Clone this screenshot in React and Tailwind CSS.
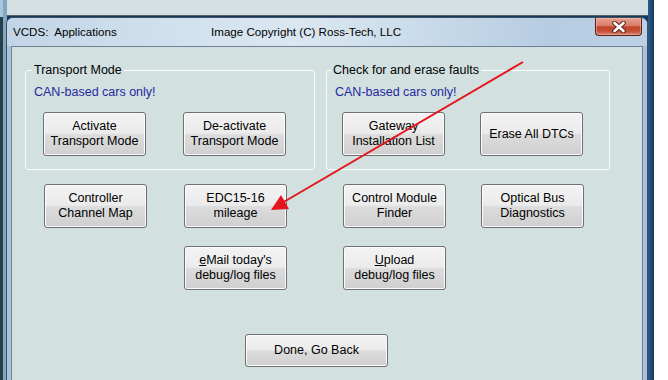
import React from "react";

const btnBase =
  "flex flex-col items-center justify-center shrink-0 rounded-[3px] border border-[#707070] bg-[linear-gradient(to_bottom,#f3f3f3_0%,#ebebeb_48%,#dcdcdc_52%,#cfcfcf_100%)] shadow-[inset_0_0_0_1px_#fbfbfb] text-[12.5px] leading-[15px] text-black text-center";

function Btn({ children, className = "w-[103px] h-[44px]" }) {
  return <div className={btnBase + " " + className}>{children}</div>;
}

export default function App() {
  return (
    <div className="relative w-[668px] h-[380px] overflow-hidden bg-white font-['Liberation_Sans',Arial,sans-serif]">
      {/* background window */}
      <div className="absolute left-0 top-0 w-[654px] h-[380px] flex bg-[#16395e]">
        <div className="w-[3px] h-full bg-[linear-gradient(to_bottom,#a9c6e0_0px,#a9c6e0_17px,#23404b_17px,#23404b_100%)]" />
        <div className="w-[4px] h-full bg-[#86a6c0]" />
        <div className="flex-1 h-[16px] bg-[#d3dfe0] border-b border-[#51616c]" />
        <div className="w-[6px] h-full bg-[linear-gradient(to_right,#2b5d8c,#16395e)]" />
      </div>

      {/* front window */}
      <div className="absolute left-[6px] top-[17px] w-[642px] h-[380px] rounded-t-[7px] border border-[#3e4f5f] bg-[#a8c3dd] flex flex-col">
        {/* title bar */}
        <div className="h-[28px] shrink-0 flex items-center pl-[6px] rounded-t-[6px] bg-[linear-gradient(to_right,#c2d5e6_0%,#d3e2ef_30%,#dbe7f1_45%,#c9dbea_65%,#b6cce2_85%,#bcd1e6_100%)] text-[11.6px] text-black">
          <span className="w-[198px] whitespace-pre">VCDS:  Applications</span>
          <span className="whitespace-pre">Image Copyright (C) Ross-Tech, LLC</span>
        </div>
        {/* close button */}
        <div className="absolute left-[588px] top-0 w-[47px] h-[18px] rounded-b-[4px] border border-t-0 border-[#5b1f16] bg-[linear-gradient(to_bottom,#e6a292_0%,#d97c67_45%,#c3432b_52%,#c44d35_75%,#d5826f_100%)] shadow-[inset_0_0_0_1px_rgba(255,200,190,0.45)] flex items-center justify-center">
          <svg width="14" height="12" viewBox="0 0 14 12">
            <path d="M2.5 2 L11.5 10 M11.5 2 L2.5 10" stroke="#5a2a22" strokeWidth="4.6" strokeLinecap="round" />
            <path d="M2.5 2 L11.5 10 M11.5 2 L2.5 10" stroke="#ffffff" strokeWidth="2.6" strokeLinecap="round" />
          </svg>
        </div>

        {/* frame + client */}
        <div className="flex-1 px-[4px]">
          <div className="h-full border border-b-0 border-[#6f8192] bg-[#d3e0e0] flex flex-col pl-[13px]">
            {/* groups */}
            <div className="flex mt-[16px]">
              <fieldset className="w-[290px] border border-[#fafcfc] rounded-[3px] pb-[13px]">
                <legend className="ml-[6px] px-[2px] text-[12.5px] leading-[15px] text-black">Transport Mode</legend>
                <div className="ml-[8px] mt-[7px] text-[12.5px] leading-[15px] text-[#1f2a9e]">CAN-based cars only!</div>
                <div className="flex mt-[12px] ml-[17px] gap-[37px]">
                  <Btn><span>Activate</span><span>Transport Mode</span></Btn>
                  <Btn><span>De-activate</span><span>Transport Mode</span></Btn>
                </div>
              </fieldset>
              <fieldset className="ml-[11px] w-[284px] border border-[#fafcfc] rounded-[3px] pb-[13px]">
                <legend className="ml-[4px] px-[2px] text-[12.5px] leading-[15px] text-black">Check for and erase faults</legend>
                <div className="ml-[8px] mt-[7px] text-[12.5px] leading-[15px] text-[#1f2a9e]">CAN-based cars only!</div>
                <div className="flex mt-[12px] ml-[15px] gap-[35px]">
                  <Btn><span>Gateway</span><span>Installation List</span></Btn>
                  <Btn><span>Erase All DTCs</span></Btn>
                </div>
              </fieldset>
            </div>

            {/* row 2 */}
            <div className="flex mt-[14px] ml-[19px]">
              <Btn><span>Controller</span><span>Channel Map</span></Btn>
              <Btn className="w-[103px] h-[44px] ml-[37px]"><span>EDC15-16</span><span>mileage</span></Btn>
              <Btn className="w-[103px] h-[44px] ml-[56px]"><span>Control Module</span><span>Finder</span></Btn>
              <Btn className="w-[103px] h-[44px] ml-[35px]"><span>Optical Bus</span><span>Diagnostics</span></Btn>
            </div>

            {/* row 3 */}
            <div className="flex mt-[18px] ml-[159px] gap-[56px]">
              <Btn><span><span className="underline">e</span>Mail today's</span><span>debug/log files</span></Btn>
              <Btn><span><span className="underline">U</span>pload</span><span>debug/log files</span></Btn>
            </div>

            {/* done */}
            <div className="flex mt-[44px] ml-[220px]">
              <Btn className="w-[143px] h-[33px]"><span>Done, Go Back</span></Btn>
            </div>
          </div>
        </div>
      </div>

      {/* red arrow annotation */}
      <svg className="absolute left-0 top-0 pointer-events-none" width="668" height="380" viewBox="0 0 668 380">
        <line x1="523" y1="62" x2="282" y2="203" stroke="#e3161c" strokeWidth="2" />
        <polygon points="271,210 289,209 281,195" fill="#e3161c" />
      </svg>
    </div>
  );
}
